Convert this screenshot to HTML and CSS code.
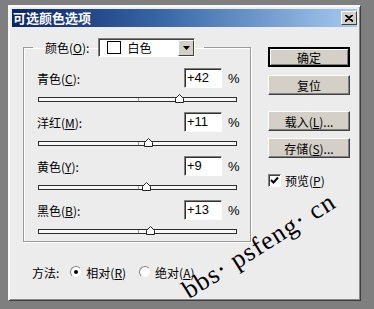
FILE: index.html
```html
<!DOCTYPE html>
<html>

<head>
    <meta charset="UTF-8" />
    <link rel="stylesheet" href="styles.css">
</head>

<body>
    <div class="desk">
        <div class="dialog">
            <div class="titlebar">
                <span class="title">可选颜色选项</span>
                <span class="close">
                    <svg width="8" height="7" viewBox="0 0 8 7">
                        <path d="M0 0 L8 7 M1 0 L8 6 M8 0 L0 7 M7 0 L0 6" stroke="#000" stroke-width="1.2" />
                    </svg>
                </span>
            </div>
            <div class="client">
                <div class="main">
                    <fieldset class="group">
                        <legend class="group-legend">
                            <span class="lbl">颜色(<u>O</u>):</span>
                            <span class="combo">
                                <span class="swatch"></span>
                                <span class="combo-text">白色</span>
                                <span class="combo-btn">
                                    <svg width="7" height="4" viewBox="0 0 7 4">
                                        <path d="M0 0 H7 L3.5 4 Z" fill="#000" />
                                    </svg>
                                </span>
                            </span>
                        </legend>
                        <div class="channel">
                            <div class="channel-head">
                                <span class="lbl">青色(<u>C</u>):</span>
                                <span class="field">+42</span>
                                <span class="pct">%</span>
                            </div>
                            <div class="slider">
                                <div class="track"><span class="mid"></span>
                                    <svg class="thumb" style="left:71%" width="9" height="9" viewBox="0 0 9 9">
                                        <path d="M0.5 8.5 V4.5 L4.5 0.5 L8.5 4.5 V8.5 Z" fill="#fff" stroke="#222" />
                                    </svg>
                                </div>
                            </div>
                        </div>
                        <div class="channel">
                            <div class="channel-head">
                                <span class="lbl">洋红(<u>M</u>):</span>
                                <span class="field">+11</span>
                                <span class="pct">%</span>
                            </div>
                            <div class="slider">
                                <div class="track"><span class="mid"></span>
                                    <svg class="thumb" style="left:55.5%" width="9" height="9" viewBox="0 0 9 9">
                                        <path d="M0.5 8.5 V4.5 L4.5 0.5 L8.5 4.5 V8.5 Z" fill="#fff" stroke="#222" />
                                    </svg>
                                </div>
                            </div>
                        </div>
                        <div class="channel">
                            <div class="channel-head">
                                <span class="lbl">黄色(<u>Y</u>):</span>
                                <span class="field">+9</span>
                                <span class="pct">%</span>
                            </div>
                            <div class="slider">
                                <div class="track"><span class="mid"></span>
                                    <svg class="thumb" style="left:54.5%" width="9" height="9" viewBox="0 0 9 9">
                                        <path d="M0.5 8.5 V4.5 L4.5 0.5 L8.5 4.5 V8.5 Z" fill="#fff" stroke="#222" />
                                    </svg>
                                </div>
                            </div>
                        </div>
                        <div class="channel">
                            <div class="channel-head">
                                <span class="lbl">黑色(<u>B</u>):</span>
                                <span class="field">+13</span>
                                <span class="pct">%</span>
                            </div>
                            <div class="slider">
                                <div class="track"><span class="mid"></span>
                                    <svg class="thumb" style="left:56.5%" width="9" height="9" viewBox="0 0 9 9">
                                        <path d="M0.5 8.5 V4.5 L4.5 0.5 L8.5 4.5 V8.5 Z" fill="#fff" stroke="#222" />
                                    </svg>
                                </div>
                            </div>
                        </div>
                    </fieldset>
                    <div class="method">
                        <span>方法:</span>
                        <span class="radio checked"></span>
                        <span class="radio-text">相对(<u>R</u>)</span>
                        <span class="radio second"></span>
                        <span class="radio-text">绝对(<u>A</u>)</span>
                    </div>
                </div>
                <div class="side">
                    <div class="btn default">确定</div>
                    <div class="btn reset">复位</div>
                    <div class="btn load">载入(<u>L</u>)...</div>
                    <div class="btn save">存储(<u>S</u>)...</div>
                    <div class="preview">
                        <span class="check">
                            <svg width="9" height="9" viewBox="0 0 9 9">
                                <path d="M1 4 L3.5 6.5 L8 1.5" stroke="#000" stroke-width="2" fill="none" />
                            </svg>
                        </span>
                        <span>预览(<u>P</u>)</span>
                    </div>
                </div>
            </div>
            <span class="watermark">bbs· psfeng· cn</span>
        </div>
    </div>
</body>

</html>
```

FILE: styles.css
```css
body {
    margin: 0;
    padding: 0;
    background-color: #7f7f7f;
    font-family: "Noto Sans CJK SC", sans-serif;
    font-size: 12px;
    color: #000;
}

u {
    text-decoration: underline;
    text-underline-offset: 1px;
}

.desk {
    padding: 5px 0 0 8px;
    height: 309px;
    box-sizing: border-box;
}

.dialog {
    position: relative;
    width: 353px;
    height: 296px;
    box-sizing: border-box;
    padding: 3px;
    background-color: #ececec;
    border: 1px solid;
    border-color: #f6f6f6 #3c3c3c #3c3c3c #f6f6f6;
    box-shadow: inset 1px 1px #fff, inset -1px -1px #8a8a8a;
}

/* title bar */
.titlebar {
    height: 18px;
    display: flex;
    align-items: center;
    justify-content: space-between;
    padding: 0 0 0 1px;
    background: linear-gradient(to right, #0a246a, #3a6aa8 45%, #a6caf0);
}

.title {
    color: #fff;
    font-weight: bold;
    font-size: 13px;
    line-height: 18px;
}

.close {
    width: 16px;
    height: 14px;
    box-sizing: border-box;
    display: flex;
    align-items: center;
    justify-content: center;
    background-color: #d4d0c8;
    border: 1px solid;
    border-color: #fff #404040 #404040 #fff;
}

.client {
    display: flex;
    padding: 11px 0 0 11px;
}

.main {
    width: 228px;
}

/* group box */
.group {
    margin: 0;
    padding: 0 12px 0 13px;
    border: 1px solid #9a9a9a;
    box-shadow: 1px 1px #fff, inset 1px 1px #fff;
}

.group-legend {
    display: flex;
    align-items: center;
    height: 19px;
    margin-left: -4px;
    padding: 0 9px 0 12px;
}

.combo {
    display: flex;
    align-items: center;
    width: 97px;
    height: 19px;
    box-sizing: border-box;
    margin-left: 9px;
    background-color: #fff;
    border: 1px solid;
    border-color: #808080 #fff #fff #808080;
    box-shadow: inset 1px 1px #404040;
}

.swatch {
    width: 14px;
    height: 13px;
    box-sizing: border-box;
    margin-left: 8px;
    border: 1px solid #000;
    background-color: #fff;
}

.combo-text {
    margin-left: 6px;
}

.combo-btn {
    margin-left: auto;
    width: 16px;
    height: 16px;
    margin-top: 1px;
    box-sizing: border-box;
    display: flex;
    align-items: center;
    justify-content: center;
    background-color: #d4d0c8;
    border: 1px solid;
    border-color: #fff #404040 #404040 #fff;
}

/* channels */
.channel:first-of-type {
    margin-top: 11px;
}

.channel+.channel {
    margin-top: 2px;
}

.channel-head {
    display: flex;
    align-items: center;
    height: 20px;
}

.field {
    margin-left: auto;
    width: 38px;
    height: 20px;
    box-sizing: border-box;
    padding-left: 2px;
    background-color: #fff;
    border: 1px solid;
    border-color: #808080 #fff #fff #808080;
    box-shadow: inset 1px 1px #303030;
    font-family: "Liberation Sans", sans-serif;
    font-size: 13px;
    line-height: 18px;
}

.pct {
    width: 10px;
    margin-left: 6px;
    font-family: "Liberation Sans", sans-serif;
    font-size: 13px;
}

.slider {
    height: 22px;
    padding-top: 9px;
    box-sizing: border-box;
}

.channel:last-child .slider {
    height: 21px;
}

.track {
    position: relative;
    height: 5px;
    margin: 0 1px 0 1px;
    box-sizing: border-box;
    background-color: #f8f8f8;
    border: 1px solid #2e2e2e;
}

.mid {
    position: absolute;
    left: 50%;
    top: 0;
    bottom: 0;
    width: 1px;
    background-color: #999;
}

.thumb {
    position: absolute;
    top: -4px;
    margin-left: -4px;
}

/* method row */
.method {
    display: flex;
    align-items: center;
    height: 16px;
    margin-top: 22px;
    padding-left: 9px;
}

.radio {
    width: 12px;
    height: 12px;
    box-sizing: border-box;
    margin-left: 11px;
    display: flex;
    align-items: center;
    justify-content: center;
    border-radius: 50%;
    background-color: #fff;
    border: 1px solid;
    border-color: #808080 #e8e8e8 #e8e8e8 #808080;
}

.radio.second {
    margin-left: 13px;
}

.radio.checked::after {
    content: "";
    width: 4px;
    height: 4px;
    border-radius: 50%;
    background-color: #000;
}

.radio-text {
    margin-left: 4px;
}

/* buttons */
.side {
    width: 82px;
    margin-left: 17px;
    padding-top: 9px;
}

.btn {
    height: 20px;
    box-sizing: border-box;
    display: flex;
    align-items: center;
    justify-content: center;
    background-color: #d4d0c8;
    border: 1px solid;
    border-color: #fff #404040 #404040 #fff;
    box-shadow: inset -1px -1px #808080;
}

.btn.default {
    border: 2px solid #000;
    box-shadow: inset 1px 1px #fff, inset -1px -1px #808080;
}

.btn.reset {
    margin-top: 8px;
}

.btn.load {
    margin-top: 16px;
}

.btn.save {
    margin-top: 7px;
}

.preview {
    display: flex;
    align-items: center;
    margin-top: 14px;
}

.check {
    width: 13px;
    height: 13px;
    box-sizing: border-box;
    margin-right: 4px;
    display: flex;
    align-items: center;
    justify-content: center;
    background-color: #fff;
    border: 1px solid;
    border-color: #808080 #fff #fff #808080;
    box-shadow: inset 1px 1px #404040;
}

/* watermark over the dialog */
.watermark {
    position: absolute;
    left: 160px;
    top: 226px;
    width: 180px;
    text-align: center;
    transform: rotate(-32deg);
    font-family: "Liberation Serif", serif;
    font-size: 26px;
    line-height: 28px;
    letter-spacing: 1px;
    white-space: nowrap;
}
```
